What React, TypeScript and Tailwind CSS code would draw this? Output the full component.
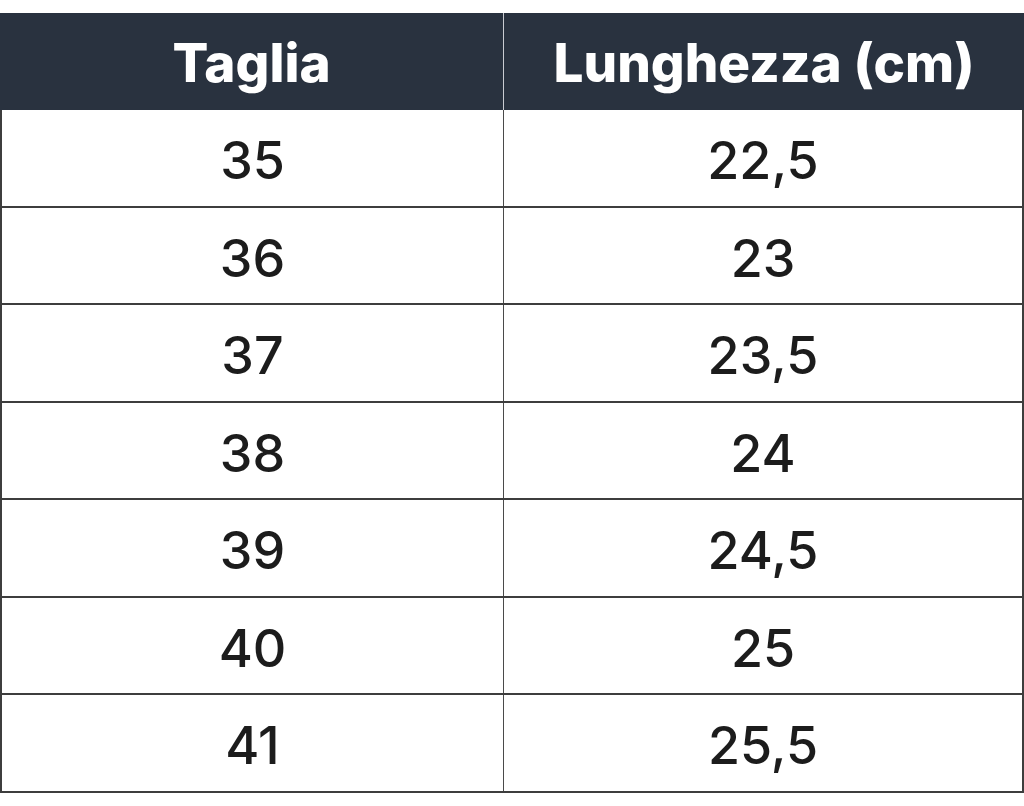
const rows: [string, string][] = [
  ["35", "22,5"],
  ["36", "23"],
  ["37", "23,5"],
  ["38", "24"],
  ["39", "24,5"],
  ["40", "25"],
  ["41", "25,5"],
];

export default function App() {
  return (
    <div
      className="w-[1024px] h-[806px] bg-white pt-[13px]"
      style={{ fontFamily: "Inter, 'Noto Sans', sans-serif" }}
    >
      {/* Header */}
      <div className="grid grid-cols-[504px_1fr] h-[97px] bg-[#29323f] text-white font-extrabold text-[53px]">
        <div className="flex items-center justify-center border-r border-[#c9ccd2] pt-[4px]">
          Taglia
        </div>
        <div className="flex items-center justify-center pt-[4px]">
          Lunghezza (cm)
        </div>
      </div>

      {/* Body */}
      <div className="border-l-2 border-r-2 border-[#3d3d3d]">
        {rows.map(([size, length]) => (
          <div
            key={size}
            className="grid grid-cols-[502px_1fr] h-[97.5px] border-b-2 border-[#3d3d3d] text-[#1c1c1c] font-medium text-[52px]"
          >
            <div className="flex items-center justify-center border-r border-[#4a4a4a] pt-[7px]">
              {size}
            </div>
            <div className="flex items-center justify-center pt-[7px]">
              {length}
            </div>
          </div>
        ))}
      </div>
    </div>
  );
}
